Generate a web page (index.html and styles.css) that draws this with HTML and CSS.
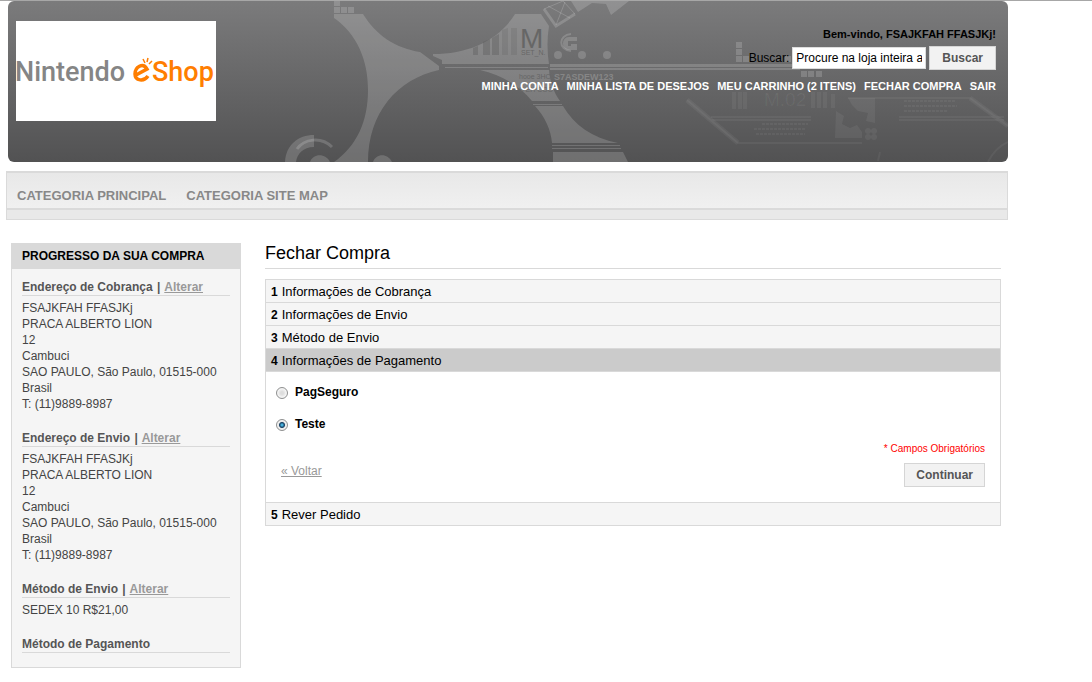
FILE: index.html
```html
<!DOCTYPE html>
<html lang="pt-BR">
<head>
<meta charset="utf-8">
<title>Fechar Compra</title>
<link rel="stylesheet" href="styles.css">
</head>
<body>
<div class="page">
  <header class="header">
    <svg class="header-art" viewBox="8 1 1000 161" preserveAspectRatio="xMinYMin slice" aria-hidden="true">
      <g fill="#fff" fill-opacity=".17">
        <path d="M334 1h6v5h-6zM334 7h6v6h-6zM341 7h6v6h-6zM348 7h6v6h-6z"/>
        <path d="M334 14H363C376 35 395 48 420 52L439 66V70C397 79 368 113 368 162H334C357 146 368 121 368 90C368 60 357 34 334 18Z"/>
        <path d="M433 54C469 54 499 40 515 14H541L549 26Q546 45 549 64H442V60L433 56Z"/>
        <path d="M445 67H548V68H445ZM550 64H804V67H550ZM550 68H800V70H550Z"/>
        <path d="M480 70H549C550 82 554 93 560 101H532C520 87 503 75 480 70ZM533 104H562V105H533ZM535 106H563C574 125 592 138 618 143H552C551 130 545 117 535 106ZM552 145H620V146H552ZM552 148H621V149H552ZM553 152H623L628 162H553Z"/>
        <path d="M285 162C286 145 298 135 314 135V147C303 147 297 154 296 162ZM310 162C313 153 326 153 330 162ZM373 162C376 153 388 153 392 162Z"/>
        <circle cx="558" cy="55" r="4"/><circle cx="582" cy="55" r="4"/><circle cx="607" cy="55" r="4"/>
        <path d="M571 1H629L611 15L606 4L592 3L578 12Z"/>
        <path d="M736 42h6v6h-6zM736 49h6v6h-6zM736 56h6v6h-6zM743 56h6v6h-6zM801 71h6v6h-6zM808 71h6v6h-6zM816 71h6v6h-6zM785 56h6v6h-6z"/>
        <path d="M577 37H569C561 37 561 50 569 50H577V44H571V46H568V41H577Z"/>
      </g>
      <g fill="#555" fill-opacity=".35">
        <path d="M473 48L478 46V55H473ZM483 42L490 39V55H483ZM492 38L499 34V55H492Z"/>
        <path d="M502 30L508 28V55H502ZM511 28H517V55H511Z" fill-opacity=".18"/>
      </g>
      <g fill="none" stroke="#fff" stroke-opacity=".17">
        <path d="M297 149C304 139 321 136 332 147" stroke-width="3"/>
        <path d="M544 9L556 26L575 14" stroke-width="3"/>
        <path d="M544 9L563 1L575 14M548 6L570 18M565 2L556 25" stroke-width="1"/>
        <path d="M571 34C558 35 558 50 571 51" stroke-width="2"/>
      </g>
      <g class="art-label">
        <text x="520" y="48" font-size="28">M</text>
        <text x="521" y="55" font-size="7">SET_N.</text>
        <text x="519" y="79" font-size="7">hooe 3HC</text>
        <text x="519" y="92" font-size="7">S EH COO</text>
      </g>
      <text class="art-code" x="554" y="80">S7ASDEW123</text>
      <g fill="none" stroke="#fff" stroke-opacity=".05" stroke-width="2">
        <path d="M687 100L738 143H862M711 117H811M712 120H811M848 98H970L1008 126M899 117H1004M899 120H1004M878 161L880 152M988 162Q995 148 1008 142"/>
        <path d="M687 100L738 143M970 98L1008 126" stroke-width="5"/>
        <path d="M734 92V109M740 92V109M745 92V109M813 92V108M819 92V108M825 92V108M833 94V108" stroke-width="4"/>
        <path d="M762 124H808M754 129H806M756 134H805M904 101H955M904 106H957M904 111H947" stroke-dasharray="3 1"/>
      </g>
      <g fill="#fff" fill-opacity=".06">
        <path d="M836 111L844 116L842 124L850 128L857 125L862 132V138H835ZM848 98H875V123L866 121L868 113L858 111L852 105Z"/>
        <circle cx="868" cy="131" r="3"/><circle cx="874" cy="131" r="3"/><circle cx="868" cy="137" r="3"/><circle cx="874" cy="137" r="3"/>
        <text class="art-model" x="764" y="106">M.02</text>
      </g>
    </svg>
    <a class="logo" href="#" aria-label="Nintendo eShop">
      <svg viewBox="0 0 200 100">
        <text class="logo-name" x="-1" y="60">Nintendo</text>
        <text class="logo-shop" x="136" y="60">Shop</text>
        <path d="M120 54L131 48C127 41 119 46 119 53C119 60 128 61 132 55" fill="none" stroke="#ff7e00" stroke-width="3.5"/>
        <path d="M129 42L127 38M131 41L132 37M133 43L136 40" fill="none" stroke="#ff7e00" stroke-width="1.5"/>
      </svg>
    </a>
    <div class="header-tools">
      <p class="welcome">Bem-vindo, FSAJKFAH FFASJKj!</p>
      <form class="search">
        <label for="search">Buscar:</label>
        <input id="search" type="text" value="Procure na loja inteira aqui...">
        <button class="button" type="button">Buscar</button>
      </form>
      <nav class="links">
        <a href="#">MINHA CONTA</a>
        <a href="#">MINHA LISTA DE DESEJOS</a>
        <a href="#">MEU CARRINHO (2 ITENS)</a>
        <a href="#">FECHAR COMPRA</a>
        <a href="#">SAIR</a>
      </nav>
    </div>
  </header>

  <nav class="categories">
    <div class="categories-list">
      <a href="#">CATEGORIA PRINCIPAL</a>
      <a href="#">CATEGORIA SITE MAP</a>
    </div>
  </nav>

  <div class="columns">
    <aside class="progress">
      <h2>PROGRESSO DA SUA COMPRA</h2>
      <div class="progress-body">
        <section>
          <h3>Endereço de Cobrança <span>|</span> <a href="#">Alterar</a></h3>
          <address>FSAJKFAH FFASJKj<br>PRACA ALBERTO LION<br>12<br>Cambuci<br>SAO PAULO, São Paulo, 01515-000<br>Brasil<br>T: (11)9889-8987</address>
        </section>
        <section>
          <h3>Endereço de Envio <span>|</span> <a href="#">Alterar</a></h3>
          <address>FSAJKFAH FFASJKj<br>PRACA ALBERTO LION<br>12<br>Cambuci<br>SAO PAULO, São Paulo, 01515-000<br>Brasil<br>T: (11)9889-8987</address>
        </section>
        <section>
          <h3>Método de Envio <span>|</span> <a href="#">Alterar</a></h3>
          <p>SEDEX 10 R$21,00</p>
        </section>
        <section>
          <h3>Método de Pagamento</h3>
        </section>
      </div>
    </aside>

    <main class="checkout">
      <h1>Fechar Compra</h1>
      <ol class="steps">
        <li><h2><b>1</b>Informações de Cobrança</h2></li>
        <li><h2><b>2</b>Informações de Envio</h2></li>
        <li><h2><b>3</b>Método de Envio</h2></li>
        <li>
          <h2 class="current"><b>4</b>Informações de Pagamento</h2>
          <form class="payment">
            <div class="option"><input type="radio" name="method" id="pagseguro"><label for="pagseguro">PagSeguro</label></div>
            <div class="option"><input type="radio" name="method" id="teste" checked><label for="teste">Teste</label></div>
            <p class="required">* Campos Obrigatórios</p>
            <div class="actions">
              <a href="#">« Voltar</a>
              <button class="button" type="button">Continuar</button>
            </div>
          </form>
        </li>
        <li><h2><b>5</b>Rever Pedido</h2></li>
      </ol>
    </main>
  </div>
</div>
</body>
</html>
```
FILE: styles.css
```css
* { box-sizing: border-box; }

body {
  margin: 0;
  border-top: 1px solid #a7a7a7;
  background: #fff;
  color: #000;
  font: 12px/16px "Liberation Sans", Arial, sans-serif;
}

h1, h2, h3, p, ol { margin: 0; padding: 0; }

.page { max-width: 1008px; padding-left: 6px; }

/* Header */
.header {
  position: relative;
  display: flex;
  justify-content: space-between;
  align-items: flex-start;
  min-height: 161px;
  margin-left: 2px;
  padding: 20px 12px 20px 8px;
  border-radius: 6px;
  overflow: hidden;
  background: linear-gradient(#7b7b7c, #525253);
}
.header-art { position: absolute; inset: 0; width: 100%; height: 100%; }
.art-label { fill: #666; font-family: "Liberation Sans", Arial, sans-serif; }
.art-code { fill: #868686; font: bold 9px "Liberation Sans", Arial, sans-serif; }
.art-model { font: 19px "Liberation Sans", Arial, sans-serif; }

.logo { position: relative; flex: none; width: 200px; height: 100px; background: #fff; }
.logo svg { display: block; width: 100%; height: 100%; }
.logo-name { fill: #858585; font: 500 27px Roboto, sans-serif; }
.logo-shop { fill: #ff7e00; font: 500 27px Roboto, sans-serif; }

.header-tools {
  position: relative;
  display: flex;
  flex-direction: column;
  align-items: flex-end;
  padding-top: 5px;
}
.welcome { font-size: 11px; font-weight: bold; }
.search { display: flex; align-items: center; gap: 3px; margin-top: 4px; }
.search input {
  width: 134px;
  height: 22px;
  padding: 0 3px;
  border: 1px solid #ddd;
  background: #fff;
  color: #000;
  font: inherit;
}
.button {
  height: 24px;
  padding: 0 11px;
  border: 1px solid #d5d5d5;
  background: #f2f2f2;
  color: #555;
  font: bold 12px/16px "Liberation Sans", Arial, sans-serif;
}
.search .button { padding: 0 12px; }
.links { display: flex; gap: 8px; margin-top: 8px; font-size: 11px; font-weight: bold; }
.links a { color: #fff; text-decoration: none; }

/* Category bar */
.categories {
  margin-top: 9px;
  padding-bottom: 9px;
  border: 1px solid #dadada;
  border-top-width: 2px;
  background: #e9e9e9;
}
.categories-list {
  display: flex;
  gap: 20px;
  padding: 15px 10px 4px;
  border-bottom: 2px solid #dadada;
  background: linear-gradient(#e8e8e8, #f0f0f0);
  font-size: 13px;
  font-weight: bold;
}
.categories a { color: #888; text-decoration: none; }

/* Columns */
.columns { display: flex; align-items: flex-start; gap: 24px; padding: 23px 7px 14px 5px; }

.progress { flex: none; width: 230px; border: 1px solid #d9d9d9; background: #f5f5f5; }
.progress h2 { padding: 4px 10px 5px; background: #d9d9d9; font-size: 12px; line-height: 16px; }
.progress-body { display: flex; flex-direction: column; gap: 18px; padding: 10px 10px 14px; color: #444; }
.progress h3 { border-bottom: 1px solid #d9d9d9; color: #555; font-size: 12px; line-height: 16px; }
.progress h3 span { margin: 0 1px; }
.progress a { color: #999; }
.progress address, .progress p { margin-top: 4px; font-style: normal; }

.checkout { flex: 1; min-width: 0; }
.checkout h1 { padding-bottom: 5px; border-bottom: 1px solid #d9d9d9; font-size: 18px; font-weight: normal; line-height: 20px; }
.steps { margin-top: 10px; border: 1px solid #d9d9d9; border-bottom: 0; list-style: none; }
.steps h2 {
  display: flex;
  gap: 4px;
  padding: 4px 5px 2px;
  border-bottom: 1px solid #d9d9d9;
  background: #f5f5f5;
  font-size: 13px;
  font-weight: normal;
  line-height: 16px;
}
.steps b { font-size: 12px; }
.steps h2.current { background: #cbcbcb; }

.payment { padding: 12px 15px 15px 10px; border-bottom: 1px solid #d9d9d9; }
.option { display: flex; align-items: center; gap: 7px; height: 16px; margin-bottom: 16px; }
.option label { font-weight: bold; }
.option input {
  appearance: none;
  width: 12px;
  height: 12px;
  margin: 2px 0 0;
  border: 1px solid #8e8f8f;
  border-radius: 50%;
  background: radial-gradient(#ddd 20%, #f4f4f4 60%);
  box-shadow: inset 0 0 0 1px #f4f4f4;
}
.option input:checked { background: radial-gradient(circle, #48b1dc 0 10%, #163f62 35%, #e8e8e8 50%); }
.required { margin-top: -6px; color: #f00; font-size: 10px; line-height: 14px; text-align: right; }
.actions { display: flex; align-items: flex-start; justify-content: space-between; margin-top: 7px; padding-left: 5px; }
.actions a { color: #999; }
```
